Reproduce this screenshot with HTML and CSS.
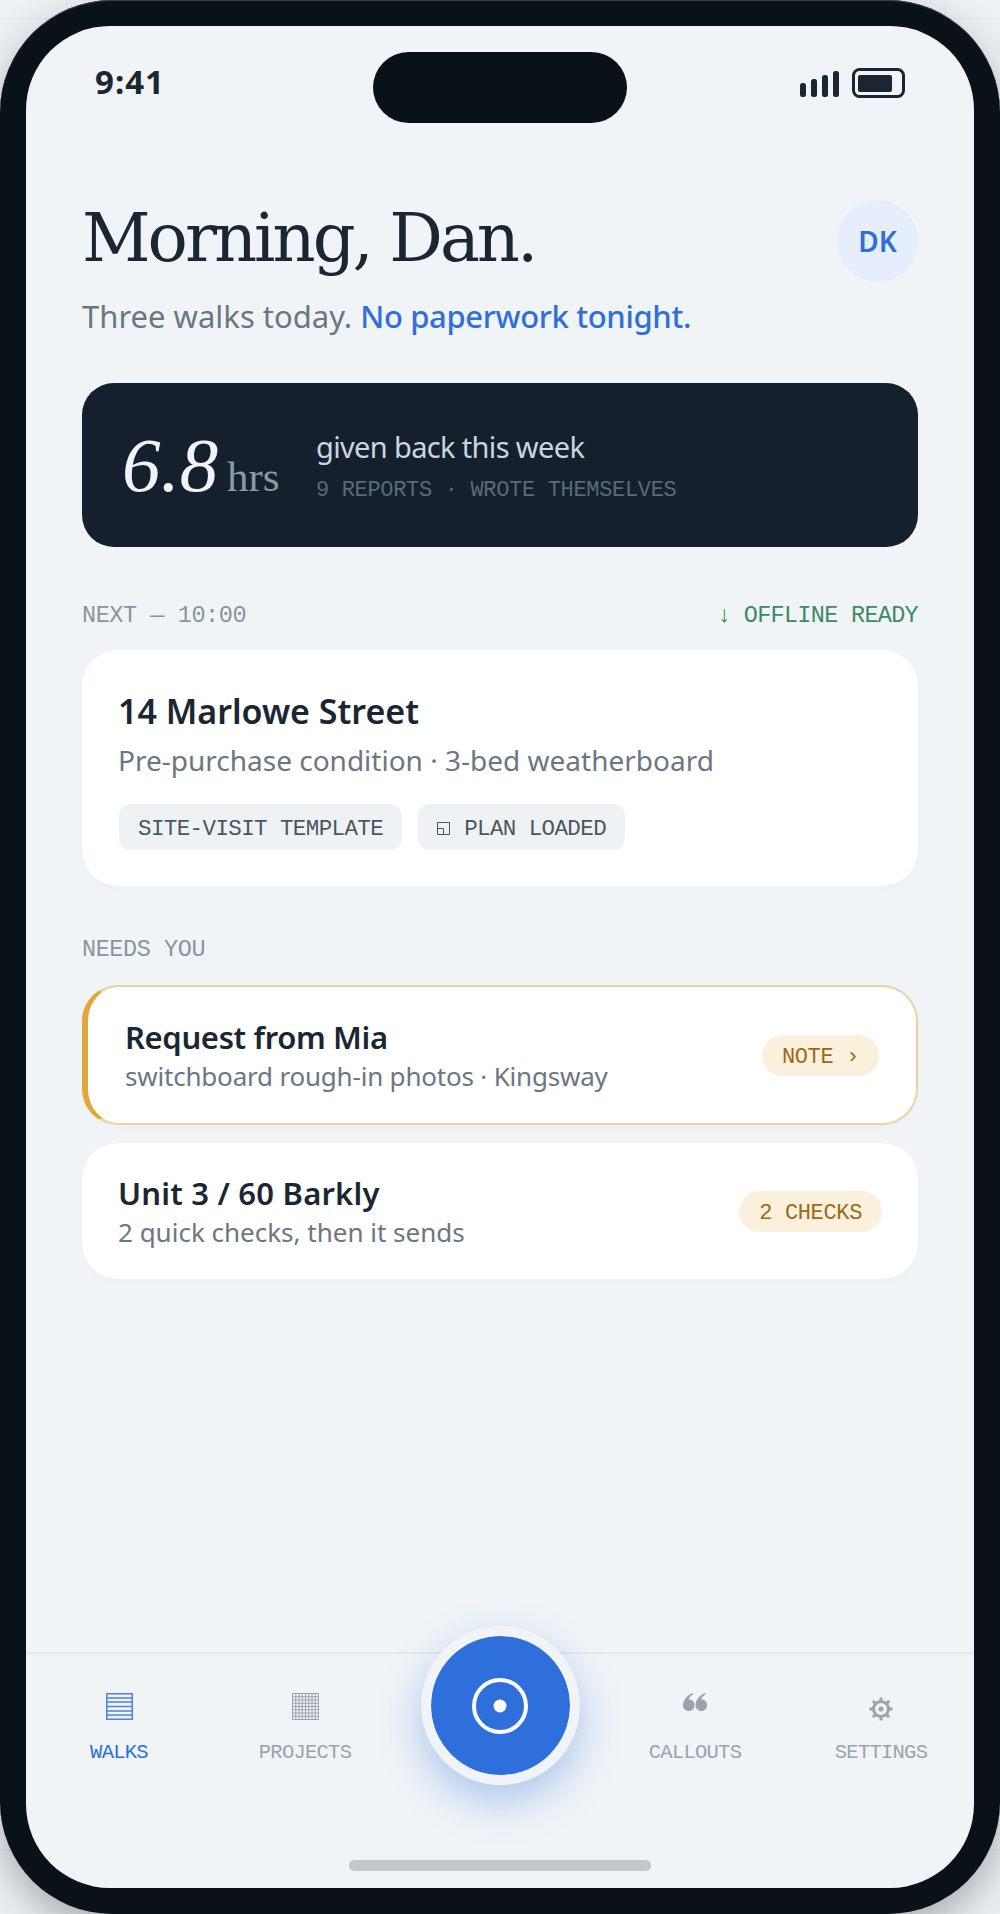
FILE: index.html
```html
<!DOCTYPE html>
<html>
<head>
    <meta charset="UTF-8">
    <title>Walks</title>
    <link rel="stylesheet" href="styles.css">
</head>
<body>
    <div class="phone">
        <div class="screen">
            <div class="status">
                <span class="time">9:41</span>
                <span class="notch"></span>
                <span class="status-icons">
                    <svg width="39" height="27" viewBox="0 0 39 27">
                        <rect x="0" y="12" width="6" height="14" rx="2.5" fill="#1a2733"/>
                        <rect x="11" y="8" width="6" height="18" rx="2.5" fill="#1a2733"/>
                        <rect x="22" y="4" width="6" height="22" rx="2.5" fill="#1a2733"/>
                        <rect x="33" y="0" width="6" height="26" rx="2.5" fill="#1a2733"/>
                    </svg>
                    <svg width="53" height="30" viewBox="0 0 53 30">
                        <rect x="1.5" y="1.5" width="50" height="27" rx="6" fill="none" stroke="#1a2733" stroke-width="3"/>
                        <rect x="6" y="7" width="34" height="17" rx="2" fill="#1a2733"/>
                    </svg>
                </span>
            </div>

            <div class="main">
                <div class="hello">
                    <h1>Morning, Dan.</h1>
                    <div class="avatar">DK</div>
                </div>
                <p class="lead">Three walks today. <b>No paperwork tonight.</b></p>

                <div class="saved">
                    <div class="saved-num"><i>6.8</i> <span>hrs</span></div>
                    <div>
                        <div class="saved-title">given back this week</div>
                        <div class="saved-note">9 REPORTS · WROTE THEMSELVES</div>
                    </div>
                </div>

                <div class="label label-next">
                    <span>NEXT — 10:00</span>
                    <span class="offline">↓ OFFLINE READY</span>
                </div>
                <div class="card next">
                    <div class="next-title">14 Marlowe Street</div>
                    <div class="next-sub">Pre-purchase condition · 3-bed weatherboard</div>
                    <div class="chips">
                        <span class="chip">SITE-VISIT TEMPLATE</span>
                        <span class="chip">
                            <svg width="13" height="13" viewBox="0 0 13 13">
                                <path d="M.5.5h12v12H.5zM.5 6.5h6v6" fill="none" stroke="#4c5660"/>
                            </svg>
                            PLAN LOADED
                        </span>
                    </div>
                </div>

                <div class="label label-needs">NEEDS YOU</div>
                <div class="card row row-request">
                    <div>
                        <div class="row-title">Request from Mia</div>
                        <div class="row-sub">switchboard rough-in photos · Kingsway</div>
                    </div>
                    <span class="pill">NOTE ›</span>
                </div>
                <div class="card row row-unit">
                    <div>
                        <div class="row-title">Unit 3 / 60 Barkly</div>
                        <div class="row-sub">2 quick checks, then it sends</div>
                    </div>
                    <span class="pill">2 CHECKS</span>
                </div>
            </div>

            <div class="tabbar">
                <div class="tabs">
                    <div class="tab tab-on">
                        <svg width="27" height="30" viewBox="0 0 27 30">
                            <path d="M.75.75h25.5v25.5H.75zM1 5h25M1 9h25M1 13.5h25M1 18h25M1 22h25" fill="none" stroke="#2f6fdb" stroke-width="1.5" opacity=".85"/>
                        </svg>
                        <span>WALKS</span>
                    </div>
                    <div class="tab">
                        <svg width="27" height="30" viewBox="0 0 27 30">
                            <path d="M.5.5h26v26H.5zM1 3.75h25M1 7h25M1 10.25h25M1 13.5h25M1 16.75h25M1 20h25M1 23.25h25M3.75 1v25M7 1v25M10.25 1v25M13.5 1v25M16.75 1v25M20 1v25M23.25 1v25" fill="none" stroke="#9aa3ad" stroke-width="1"/>
                        </svg>
                        <span>PROJECTS</span>
                    </div>
                    <div class="tab">
                        <div class="shoot">
                            <svg width="56" height="56" viewBox="0 0 56 56">
                                <circle cx="28" cy="28" r="26" fill="none" stroke="#fff" stroke-width="4"/>
                                <circle cx="28" cy="28" r="6.5" fill="#fff"/>
                            </svg>
                        </div>
                    </div>
                    <div class="tab">
                        <svg width="24" height="30" viewBox="0 0 24 30">
                            <path d="M6 18C2.6 18 0 15.5 0 12.2 0 7.8 3.5 2.4 9.800 0l.5 1C7.600 2.800 6 4.800 5.700 6.600c3.300-.2 5.800 2.200 5.800 5.600S9.200 18 6 18Z" fill="#9aa3ad"/>
                            <path d="M18.500 18c-3.400 0-6-2.500-6-5.800 0-4.400 3.500-9.800 9.800-12.200l.5 1C20.100 2.800 18.500 4.800 18.200 6.600c3.300-.2 5.800 2.200 5.800 5.600S21.700 18 18.500 18Z" fill="#9aa3ad"/>
                        </svg>
                        <span>CALLOUTS</span>
                    </div>
                    <div class="tab">
                        <svg width="24" height="30" viewBox="0 0 24 30">
                            <circle cx="12" cy="16" r="7.5" fill="none" stroke="#9aa3ad" stroke-width="3"/>
                            <circle cx="12" cy="16" r="2.5" fill="#9aa3ad"/>
                            <path d="M12 4.500v3M12 24.500v3M.5 16h3M20.500 16h3M3.900 7.900l2.100 2.100M18 22l2.100 2.100M20.100 7.900 18 10M6 22l-2.100 2.100" stroke="#9aa3ad" stroke-width="3"/>
                        </svg>
                        <span>SETTINGS</span>
                    </div>
                </div>
                <div class="home"></div>
            </div>
        </div>
    </div>
</body>
</html>
```

FILE: styles.css
```css
*{
    padding: 0;
    margin: 0;
    box-sizing: border-box;
}

body{
    width: 1000px;
    height: 1914px;
    overflow: hidden;
    background-color: #eef1f4;
    background-image:
        linear-gradient(#e3e7ea, #e3e7ea),
        linear-gradient(#e3e7ea, #e3e7ea),
        linear-gradient(#e3e7ea, #e3e7ea),
        linear-gradient(#e3e7ea, #e3e7ea);
    background-size: 1px 100%, 1px 100%, 100% 1px, 100% 1px;
    background-position: 66px 0, 945px 0, 0 18px, 0 1850px;
    background-repeat: no-repeat;
    font-family: "Noto Sans", sans-serif;
    color: #1a2733;
}

.phone{
    width: 1000px;
    height: 1914px;
    padding: 26px;
    border-radius: 112px;
    background: #0b1118;
    box-shadow: inset 0 1px 0 #3a424a, 0 16px 40px rgba(11, 17, 24, .3);
}

.screen{
    height: 100%;
    display: flex;
    flex-direction: column;
    border-radius: 84px;
    overflow: hidden;
    background: #f0f4f7;
}

/* status bar */
.status{
    display: grid;
    grid-template-columns: 1fr 254px 1fr;
    padding: 26px 69px 0 69px;
}

.time{
    font-size: 33px;
    line-height: 71px;
    height: 71px;
    margin-top: -6px;
    font-weight: 700;
    letter-spacing: 1px;
}

.notch{
    height: 71px;
    border-radius: 36px;
    background: #0b1118;
}

.status-icons{
    display: flex;
    justify-content: flex-end;
    align-items: flex-start;
    gap: 13px;
    margin-top: 16px;
}

.status-icons svg:first-child{
    margin-top: 3px;
}

/* content */
.main{
    flex: 1;
    padding: 0 56px;
}

.hello{
    display: flex;
    justify-content: space-between;
    margin-top: 77px;
    height: 82px;
}

h1{
    font-family: "DejaVu Serif", serif;
    font-weight: 400;
    font-size: 67px;
    letter-spacing: -3px;
    line-height: 82px;
    margin-top: -3px;
}

.avatar{
    width: 81px;
    height: 82px;
    border-radius: 50%;
    background: #e6eefb;
    color: #2f6fdb;
    font-size: 28px;
    font-weight: 600;
    line-height: 82px;
    text-align: center;
}

.lead{
    margin-top: 14px;
    margin-bottom: 47px;
    font-size: 31px;
    line-height: 40px;
    color: #6b7683;
}

.lead b{
    font-weight: 500;
    letter-spacing: -.35px;
    color: #2f6fdb;
}

.saved{
    display: flex;
    align-items: center;
    height: 164px;
    padding-left: 40px;
    border-radius: 32px;
    background: #14202b;
}

.saved-num{
    width: 194px;
    font-family: "Liberation Serif", serif;
    font-size: 43px;
    word-spacing: -2px;
    color: #8b99a5;
}

.saved-num i{
    font-size: 77px;
    color: #f0f4f8;
}

.saved-title{
    margin-top: 0;
    font-size: 29px;
    letter-spacing: -.65px;
    line-height: 40px;
    color: #c9d6e0;
}

.saved-note{
    margin-top: 11px;
    font-family: "Liberation Mono", monospace;
    font-size: 22px;
    letter-spacing: -.33px;
    color: #5a6a76;
}

.label{
    font-family: "Liberation Mono", monospace;
    font-size: 23.5px;
    letter-spacing: -.43px;
    line-height: 30px;
    color: #8a949d;
}

.label-next{
    display: flex;
    justify-content: space-between;
    margin-top: 54px;
    margin-bottom: -2px;
}

.label-needs{
    margin-top: 49px;
    margin-bottom: -1px;
}

.offline{
    color: #3c8a64;
    letter-spacing: -.7px;
}

.card{
    margin-top: 21px;
    border-radius: 36px;
    background: #fff;
    box-shadow: 0 2px 6px rgba(26, 39, 51, .02);
}

.next{
    height: 236px;
    padding: 39px 36px 0;
}

.next-title{
    font-size: 34px;
    font-weight: 600;
    line-height: 44px;
}

.next-sub{
    margin-top: 7px;
    font-size: 28px;
    line-height: 40px;
    color: #6b7683;
}

.chips{
    display: flex;
    gap: 16px;
    margin: 24px 0 0 1px;
}

.chip{
    display: flex;
    align-items: center;
    gap: 14px;
    height: 46px;
    padding: 3px 19px 0;
    border-radius: 12px;
    background: #eff2f5;
    font-family: "Liberation Mono", monospace;
    font-size: 22.5px;
    letter-spacing: -.6px;
    color: #4c5660;
}

.chip svg{
    margin-top: -1px;
}

.row{
    display: flex;
    justify-content: space-between;
    align-items: center;
}

.row-request{
    height: 140px;
    padding: 4px 37px 0 37px;
    border: 2px solid #e9d4a0;
    border-left: 6px solid #e0a838;
}

.row-request .pill{
    margin-top: -4px;
}

.row-request .row-title{
    letter-spacing: -.35px;
}

.row-request .row-sub{
    letter-spacing: -.2px;
}

.row-unit{
    height: 136px;
    margin-top: 18px;
    padding: 3px 36px 0 36px;
}

.row-unit .row-title{
    letter-spacing: .2px;
}

.row-unit .pill{
    margin-top: -3px;
}

.row-title{
    font-size: 31px;
    font-weight: 600;
    line-height: 39px;
}

.row-sub{
    font-size: 26px;
    line-height: 39px;
    color: #6b7683;
}

.pill{
    height: 41px;
    padding: 0 20px;
    border-radius: 21px;
    background: #fbf0dc;
    font-family: "Liberation Mono", monospace;
    font-size: 22px;
    letter-spacing: -.35px;
    line-height: 45px;
    color: #9a6a1a;
}

/* bottom tabs */
.tabbar{
    height: 236px;
    display: flex;
    flex-direction: column;
    border-top: 2px solid #e4e8ec;
}

.tabs{
    flex: 1;
    display: grid;
    grid-template-columns: 186px 186px 204px 186px 186px;
}

.tab{
    display: flex;
    flex-direction: column;
    align-items: center;
    padding-top: 39px;
    font-family: "Liberation Mono", monospace;
    font-size: 20.5px;
    letter-spacing: -.75px;
    line-height: 30px;
    color: #9aa3ad;
}

.tab span{
    margin-top: 15px;
}

.tab-on{
    color: #2f6fdb;
}

.shoot{
    width: 159px;
    height: 159px;
    margin-top: -67px;
    display: flex;
    justify-content: center;
    align-items: center;
    border: 10px solid #f0f4f7;
    border-radius: 50%;
    background: #2f6fdb;
    background-clip: padding-box;
    box-shadow: 0 16px 40px rgba(47, 111, 219, .35);
}

.home{
    width: 302px;
    height: 11px;
    margin: 0 auto 17px;
    border-radius: 6px;
    background: #c3c7cc;
}
```
